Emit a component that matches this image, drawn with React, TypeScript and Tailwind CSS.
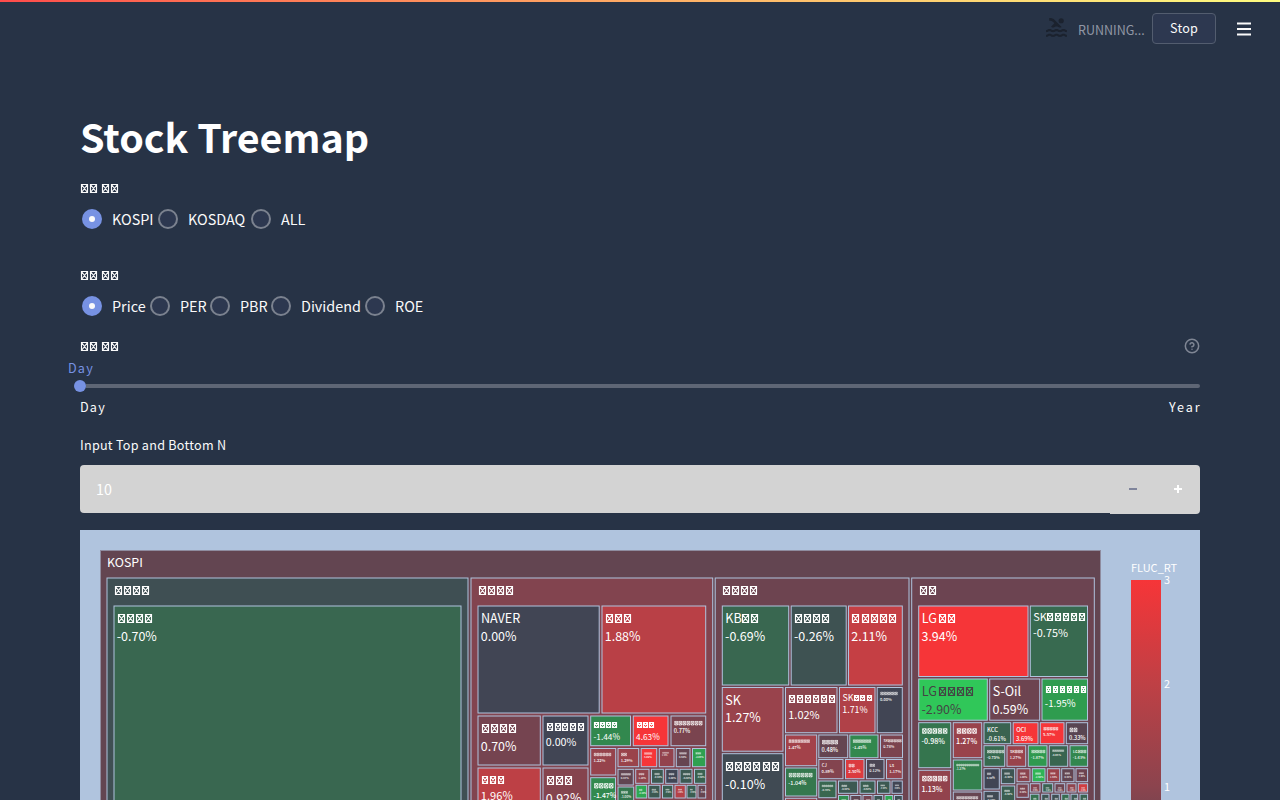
import React from "react";
import { MdPool } from "react-icons/md";
import { CircleHelp } from "lucide-react";

const SCALE: [number, number, number][] = [
  [48, 204, 90],
  [47, 158, 79],
  [53, 118, 78],
  [65, 69, 84],
  [139, 68, 78],
  [191, 64, 69],
  [246, 53, 56],
];

function colorFor(value: number) {
  const t = Math.max(0, Math.min(6, value + 3));
  const i = Math.min(5, Math.floor(t));
  const f = t - i;
  const c = SCALE[i].map((v, k) => Math.round(v + (SCALE[i + 1][k] - v) * f));
  return `rgb(${c.join(",")})`;
}

// x1, y1, x2, y2, change, latin prefix, missing glyph count, font size
type Leaf = [number, number, number, number, number, string, number, number];

const SECTORS: Leaf[] = [
  [107, 578, 468, 820, -0.2, "", 4, 14],
  [471, 578, 712.7, 820, 0.88, "", 4, 14],
  [715.2, 578, 909, 820, 0.59, "", 4, 14],
  [911.7, 578, 1094.3, 820, 0.58, "", 2, 14],
];

const LEAVES: Leaf[] = [
  [114, 606, 461, 820, -0.7, "", 4, 14],
  [478, 606, 599.2, 713, 0, "NAVER", 0, 14],
  [602, 606, 705.7, 713, 1.88, "", 3, 14],
  [478, 716, 540.3, 765, 0.7, "", 4, 14],
  [543, 716, 588, 765, 0, "", 5, 12],
  [590.7, 716, 630.5, 745.7, -1.44, "", 4, 9.3],
  [633.3, 716, 668, 745.7, 4.63, "", 3, 9.3],
  [671, 716, 705.7, 745.7, 0.77, "", 7, 6.3],
  [478, 768, 540.3, 820, 1.96, "", 3, 12.5],
  [543, 768, 588, 820, 0.92, "", 3, 14],
  [590.7, 748.5, 615.7, 775, 1.22, "", 6, 4.5],
  [618, 748.5, 638.7, 766.7, 1.29, "", 2, 4.5],
  [641.2, 748.5, 656.7, 766.7, 3.09, "", 4, 3],
  [659.3, 748.5, 674, 766.7, 1.15, "", 5, 2],
  [676.3, 748.5, 690, 766.7, 0.5, "", 4, 2.8],
  [692.5, 748.5, 705.7, 766.7, -2.05, "", 3, 2.8],
  [590.7, 777.7, 615.5, 803, -1.47, "", 4, 7.7],
  [618, 769.3, 633.3, 785, 0.43, "", 5, 3],
  [635.7, 769.3, 649, 783.3, 1.1, "", 3, 2.8],
  [651.5, 769.3, 663.3, 783.3, -0.4, "", 3, 2.6],
  [665.7, 769.3, 678, 783.3, 0, "", 3, 2.8],
  [680, 769.3, 692, 783.3, -0.4, "", 4, 2.8],
  [694.5, 769.3, 705.7, 783.3, -0.6, "", 3, 2.5],
  [618, 787, 633.7, 805, -1.0, "", 3, 3.5],
  [636, 785.3, 646.7, 798, -2.2, "", 2, 2.5],
  [648.7, 785.3, 660, 798, -0.4, "", 3, 2.2],
  [662.5, 785.3, 672.7, 798, -0.5, "", 3, 2],
  [675, 785.3, 685.3, 798, 1.8, "", 3, 2],
  [687, 785.3, 696, 798, -0.5, "", 2, 2],
  [698, 785.3, 705.7, 798, 0.5, "", 1, 2],
  [722.3, 606, 788.7, 685, -0.69, "KB", 2, 14],
  [791.2, 606, 846.2, 685, -0.26, "", 4, 14],
  [848.5, 606, 902.3, 685, 2.11, "", 5, 14],
  [722.3, 687.5, 783, 751.2, 1.27, "SK", 0, 14],
  [785.5, 687.5, 837, 732.7, 1.02, "", 6, 12.3],
  [839.5, 687.5, 875, 732.7, 1.71, "SK", 3, 10],
  [877.2, 687.5, 902.3, 732.7, 0, "", 6, 4.5],
  [722.3, 753.7, 783, 820, -0.1, "", 6, 14],
  [785.5, 735, 816.7, 765.7, 1.47, "", 7, 4.7],
  [818.8, 735, 847.7, 757.7, 0.48, "", 4, 6.3],
  [849.8, 735, 878, 757.7, -1.45, "", 6, 4.7],
  [880.5, 735, 902.5, 757.7, 0.78, "SK", 5, 4.2],
  [818.8, 759.5, 843, 778.7, 0.89, "CJ", 0, 4.7],
  [845.5, 759.5, 864, 778.7, 2.5, "", 2, 4.7],
  [866.5, 759.5, 884, 778.7, 0.12, "", 2, 4.2],
  [886.5, 759.5, 902.3, 778.7, 1.17, "LS", 0, 4.5],
  [785.5, 768, 816.7, 796, -1.04, "", 6, 6.2],
  [818.8, 781, 836, 797.7, -0.7, "", 6, 2.9],
  [838.5, 781, 857.7, 793.3, -0.4, "", 3, 2.8],
  [860, 781, 875, 793.3, -0.5, "", 3, 2.8],
  [877.5, 781, 890, 793.3, -0.4, "", 3, 2.2],
  [892, 781, 902.3, 793.3, 0, "", 3, 2],
  [785.5, 798.3, 816.7, 820, 1.2, "", 5, 5],
  [838.5, 795.5, 848.7, 810, -1.6, "", 3, 2.4],
  [850.7, 795.5, 861, 810, 0.4, "", 3, 2.4],
  [863, 795.5, 872, 810, 0.7, "", 3, 2.2],
  [874, 795.5, 882.7, 810, -0.3, "", 2, 2.2],
  [885, 795.5, 892.7, 810, -2.2, "", 2, 2],
  [894.5, 795.5, 902.3, 810, -0.2, "", 2, 2],
  [918.7, 606, 1028, 676.5, 3.94, "LG", 2, 14],
  [1030.3, 606, 1087.5, 676.5, -0.75, "SK", 5, 12.2],
  [918.7, 679, 987.3, 720.2, -2.9, "LG", 4, 14],
  [989.7, 679, 1039.7, 720.2, 0.59, "S-Oil", 0, 14],
  [1042, 679, 1087.5, 720.2, -1.95, "", 6, 10.8],
  [918.7, 722.7, 950.7, 767.7, -0.98, "", 5, 8],
  [953.3, 722.7, 981.7, 757.7, 1.27, "", 4, 8],
  [984, 722.7, 1010.7, 743.7, -0.61, "KCC", 0, 6.5],
  [1013.2, 722.7, 1038, 743.7, 3.69, "OCI", 0, 6.5],
  [1040.3, 722.7, 1064, 743.7, 5.57, "", 5, 4.6],
  [1066.3, 722.7, 1087.6, 743.7, 0.33, "", 2, 6.3],
  [984, 745.7, 1004.7, 766.3, -0.75, "", 6, 4.4],
  [1007, 745.7, 1025.7, 766.3, 1.27, "SK", 3, 4.3],
  [1028.3, 745.7, 1047, 766.3, -1.87, "", 5, 4.3],
  [1049.3, 745.7, 1067.7, 766.3, -0.65, "", 6, 3],
  [1070, 745.7, 1087.6, 766.3, -1.43, "LG", 3, 4.3],
  [953.3, 760, 981.7, 790, -1.27, "", 11, 3.2],
  [918.7, 770.3, 950.7, 820, 1.13, "", 5, 8],
  [984, 768.7, 999.3, 789, 0, "", 2, 3.1],
  [1001.3, 768.7, 1014.7, 783.7, -0.3, "", 3, 2.8],
  [1017, 768.7, 1030, 781.7, 1.0, "", 3, 2.8],
  [1032.3, 768.7, 1045, 781.7, -2.5, "", 3, 2.8],
  [1047.3, 768.7, 1059.7, 781.7, 1.3, "", 3, 2.6],
  [1061.7, 768.7, 1074, 781.7, 0.45, "", 3, 2.6],
  [1076, 768.7, 1087.6, 781.7, 0.6, "", 3, 2.4],
  [953.3, 792, 981.7, 820, 0.5, "", 8, 4.2],
  [984, 791.3, 999.3, 820, -0.1, "", 3, 3],
  [1001.3, 786, 1014.7, 803, -0.5, "", 3, 2.8],
  [1017, 784, 1028.3, 797.3, 0.8, "", 3, 2.5],
  [1030.3, 783.7, 1040, 792, 0.9, "", 3, 1.8],
  [1042.7, 783.7, 1052.7, 792, -0.6, "", 3, 1.8],
  [1055, 783.7, 1064.7, 792, 0.6, "", 3, 1.8],
  [1067, 783.7, 1076, 792, 1.1, "", 3, 1.8],
  [1078.3, 783.7, 1087.6, 792, 2.3, "", 3, 1.8],
  [1030.3, 794.2, 1039, 806, -0.9, "", 2, 2.4],
  [1041.7, 794.2, 1049, 806, -0.3, "", 2, 2.4],
  [1051.7, 794.2, 1059.3, 806, -0.2, "", 2, 2.4],
  [1061.7, 794.2, 1069, 806, -0.8, "", 2, 2.4],
  [1071, 794.2, 1077.7, 806, -0.4, "", 2, 2.4],
  [1080, 794.2, 1087.6, 806, -0.6, "", 2, 2.4],
];

const PREFIX_WIDTH: Record<string, number> = { LG: 1.15, KB: 1.14, SK: 1.07 };

function Label({ x, y, size, prefix, count, fill }: { x: number; y: number; size: number; prefix: string; count: number; fill: string }) {
  const start = x + (PREFIX_WIDTH[prefix] ?? 0) * size;
  const large = size >= 9;
  const stroke = large ? 1.15 : size * 0.11;
  const bottom = large ? Math.round(y) - 0.5 : y - stroke / 2;
  const h = large ? Math.round(size * 0.64) - 1 : size * 0.56;
  const w = large ? Math.round(size * 0.5) - 1 : size * 0.43;
  return (
    <>
      {prefix && (
        <text x={x} y={y} fontSize={size * 0.9} fill={fill} fontWeight={size < 7 ? 500 : 400}>
          {prefix}
        </text>
      )}
      {Array.from({ length: count }, (_, i) => {
        const raw = start + i * size * 0.648 + size * 0.07;
        const gx = large ? Math.round(raw) + 0.5 : raw + stroke / 2;
        return (
          <path
            key={i}
            d={`M${gx} ${bottom - h}h${w}v${h}h${-w}zl${w} ${h}m0 ${-h}l${-w} ${h}`}
            fill="none"
            stroke={fill}
            strokeWidth={stroke}
          />
        );
      })}
    </>
  );
}

function Treemap() {
  return (
    <svg className="block h-[270px] w-[1120px] shrink-0" viewBox="80 530 1120 270" fontFamily="'Noto Sans CJK KR', 'Noto Sans', sans-serif">
      <defs>
        <linearGradient id="bar" gradientUnits="userSpaceOnUse" x1="0" x2="0" y1="580" y2="1201">
          {[3, 2, 1, 0, -1, -2, -3].map((v, i) => (
            <stop key={v} offset={i / 6} stopColor={colorFor(v)} />
          ))}
        </linearGradient>
      </defs>
      <rect x="80" y="530" width="1120" height="270" fill="#b0c4de" />
      <rect x="100.5" y="550.5" width="1000" height="300" fill={colorFor(0.46)} stroke="#8f8c9f" strokeWidth="1" />
      <text x="107" y="567" fontSize="12.4" fill="#fff">KOSPI</text>
      {SECTORS.map(([x, y, x2, y2, v, name, n, size]) => (
        <g key={x}>
          <rect x={x} y={y} width={x2 - x} height={y2 - y} fill={colorFor(v)} stroke="#b0c4de" strokeWidth="1" />
          <Label x={x + 7} y={y + 17} size={size} prefix={name} count={n} fill="#fff" />
        </g>
      ))}
      {LEAVES.map(([x, y, x2, y2, v, name, n, size]) => {
        const ink = v < -2.6 ? "#444" : "#fff";
        const valueY = y + 3 + size * 2.28;
        return (
          <g key={`${x}-${y}`}>
            <rect x={x} y={y} width={x2 - x} height={y2 - y} fill={colorFor(v)} stroke="#b0c4de" strokeWidth="1" />
            <Label x={x + 3} y={y + 3 + size} size={size} prefix={name} count={n} fill={ink} />
            {valueY - size * 0.7 < 800 && (
              <text x={x + 2.8} y={valueY} fontSize={size * 0.89} fill={ink} fontWeight={size < 9 ? 500 : 400}>
                {v.toFixed(2)}%
              </text>
            )}
          </g>
        );
      })}
      <text x="1131" y="572" fontSize="11" fill="#fff">FLUC_RT</text>
      <rect x="1131" y="580" width="30" height="230" fill="url(#bar)" />
      <g fontSize="10.8" fill="#fff">
        <text x="1164" y="584">3</text>
        <text x="1164" y="688">2</text>
        <text x="1164" y="791">1</text>
      </g>
    </svg>
  );
}

function MissingGlyph() {
  return (
    <svg className="h-[10px] w-[9px] shrink-0" viewBox="0 0 9 10" fill="none" stroke="#fafafa">
      <path d="M1.5 .5h6v8h-6zl6 8m0-8l-6 8" strokeWidth="1.15" />
    </svg>
  );
}

function MissingLabel() {
  return (
    <div className="flex h-[10px] gap-[3px]">
      {[0, 1].map((k) => (
        <span key={k} className="flex">
          <MissingGlyph />
          <MissingGlyph />
        </span>
      ))}
    </div>
  );
}

function Radio({ label, width, checked }: { label: string; width: number; checked?: boolean }) {
  return (
    <label className="flex h-6 shrink-0 items-center pl-0.5" style={{ width }}>
      <span
        className={
          checked
            ? "flex size-5 shrink-0 items-center justify-center rounded-full bg-[#7792e3]"
            : "flex size-5 shrink-0 items-center justify-center rounded-full border-2 border-[#7b828f] bg-[#2d3850]"
        }
      >
        {checked && <span className="size-1.5 rounded-full bg-[#fafafa]" />}
      </span>
      <span className="ml-2.5 text-[14.4px] leading-6 whitespace-nowrap">{label}</span>
    </label>
  );
}

export default function App() {
  return (
    <div className="flex h-[800px] w-[1280px] flex-col overflow-hidden bg-[#273346] font-['Noto_Sans_CJK_KR','Noto_Sans',sans-serif] text-[#fafafa]">
      <div className="h-0.5 shrink-0 bg-linear-to-r from-[#ff4b4b] to-[#fffd80]" />
      <header className="flex h-[53px] shrink-0 items-center justify-end pr-[26px]">
        <MdPool className="mr-[9px] mb-0.5 size-[25px] text-[#1b222e]" />
        <span className="mr-[7px] w-[67px] pt-[3px] text-[12.5px] whitespace-nowrap text-[#9197a5]">RUNNING...</span>
        <button className="mr-[18px] h-[31px] w-[64px] rounded border border-[#535d6f] bg-[#2d3850] text-[12.6px] tracking-[0.2px]">Stop</button>
        <svg className="size-5" viewBox="0 0 20 20" stroke="#fafafa" strokeWidth="2">
          <path d="M3 4.5h14M3 10h14M3 15.5h14" />
        </svg>
      </header>
      <main className="flex flex-col px-20">
        <h1 className="mt-[54px] h-[54px] text-[39.4px] leading-[54px] font-bold text-white">Stock Treemap</h1>
        <div className="mt-[21px]">
          <MissingLabel />
        </div>
        <div className="mt-[13px] flex">
          <Radio label="KOSPI" width={76} checked />
          <Radio label="KOSDAQ" width={93} />
          <Radio label="ALL" width={60} />
        </div>
        <div className="mt-[40px]">
          <MissingLabel />
        </div>
        <div className="mt-[13px] flex">
          <Radio label="Price" width={68} checked />
          <Radio label="PER" width={60} />
          <Radio label="PBR" width={61} />
          <Radio label="Dividend" width={94} />
          <Radio label="ROE" width={60} />
        </div>
        <div className="mt-5 flex h-4 items-center justify-between">
          <div className="mt-0.5">
            <MissingLabel />
          </div>
          <CircleHelp className="size-4 text-[#7f8694]" strokeWidth={2.3} />
        </div>
        <div className="flex flex-col text-[12.6px]">
          <span className="mt-1 -ml-3 h-5 leading-5 tracking-[1.2px] text-[#7792e3]">Day</span>
          <div className="mt-[2px] flex h-3 items-center">
            <span className="-ml-1.5 size-3 shrink-0 rounded-full bg-[#7792e3]" />
            <span className="h-1 grow rounded-r bg-[#5e6675]" />
          </div>
          <div className="mt-[5px] flex h-5 justify-between leading-5">
            <span className="tracking-[1.2px]">Day</span>
            <span className="-mr-[1.5px] tracking-[1.9px]">Year</span>
          </div>
        </div>
        <span className="mt-[18px] h-5 text-[12.6px] leading-5 tracking-[0.26px]">Input Top and Bottom N</span>
        <div className="mt-[10px] flex h-[49px]">
          <div className="flex h-12 grow items-center rounded-l bg-[#d3d3d3] pl-4 text-[14.3px] text-white">10</div>
          <button className="flex w-[45px] items-center justify-center bg-[#d3d3d3]">
            <svg className="mb-px size-2" viewBox="0 0 8 8"><path d="M0 3h8v2h-8z" fill="#7f849b" /></svg>
          </button>
          <button className="flex w-[45px] items-center justify-center rounded-r bg-[#d3d3d3]">
            <svg className="mb-px size-2" viewBox="0 0 8 8"><path d="M0 3h3v-3h2v3h3v2h-3v3h-2v-3h-3z" fill="#fff" /></svg>
          </button>
        </div>
        <div className="mt-4 shrink-0">
          <Treemap />
        </div>
      </main>
    </div>
  );
}
